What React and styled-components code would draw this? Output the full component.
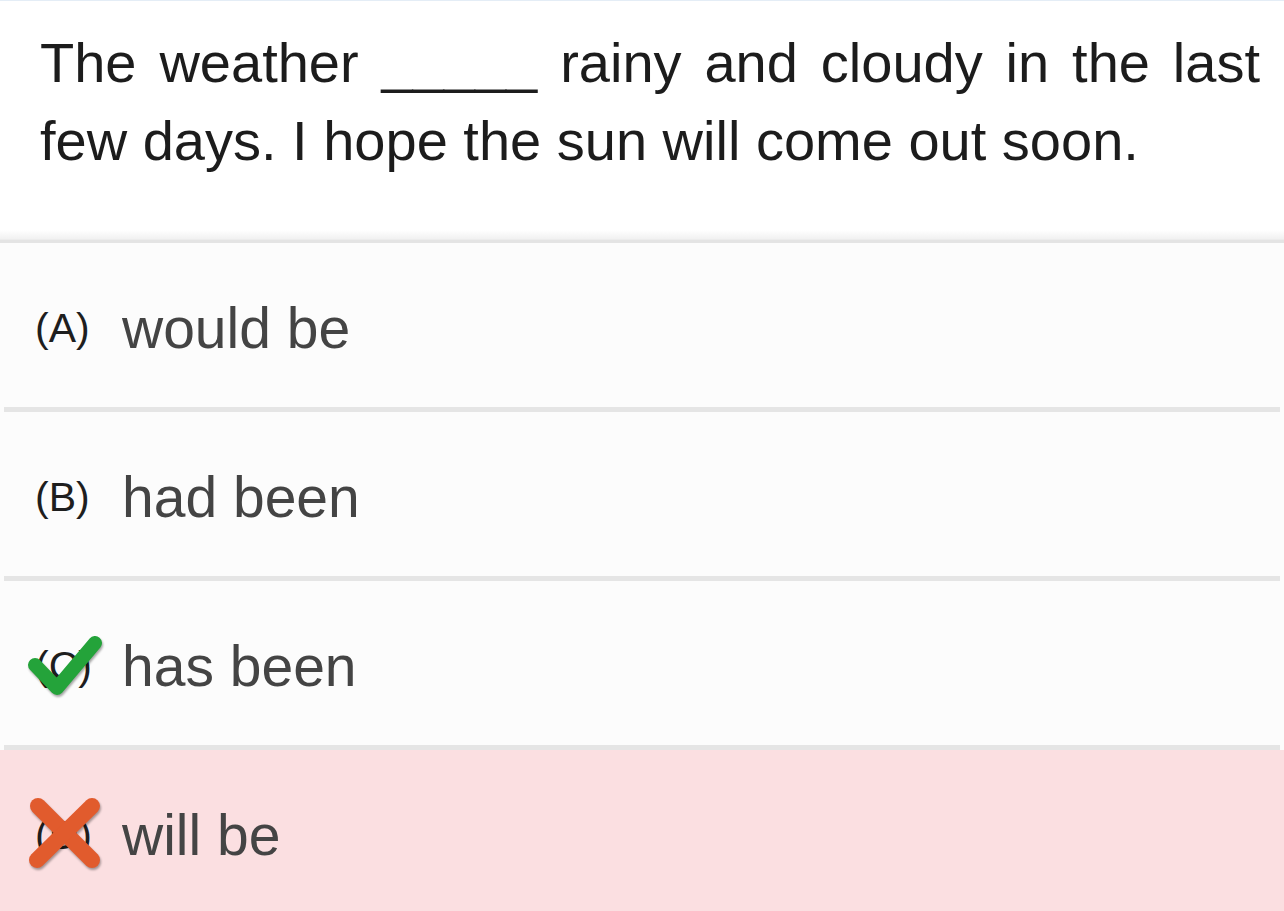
import React from "react";
import styled, { createGlobalStyle } from "styled-components";

const Global = createGlobalStyle`
  html, body { margin: 0; padding: 0; background: #ffffff; }
  body { font-family: "Liberation Sans", Arial, Helvetica, sans-serif; }
  * { box-sizing: border-box; }
`;

const Page = styled.div`
  width: 1284px;
  min-height: 911px;
  overflow: hidden;
  background: #fcfcfc;
`;

const Question = styled.div`
  background: #ffffff;
  border-top: 1px solid #e4edf6;
  padding: 23px 24px 50px 40px;
  font-size: 56px;
  line-height: 78px;
  color: #1c1c1c;
  text-align: justify;
`;

const Shade = styled.div`
  height: 13px;
  background: linear-gradient(to bottom, #ffffff 0%, #f1f1f1 70%, #e4e4e4 78%, #e4e4e4 100%);
`;

const Options = styled.div`
  display: flex;
  flex-direction: column;
`;

const Row = styled.div`
  display: flex;
  align-items: center;
  height: 164px;
  padding: 6px 0 0 35px;
  background: ${(p) => (p.$wrong ? "#fbdfe1" : "#fcfcfc")};
`;

const Separator = styled.div`
  height: 5px;
  margin: 0 4px;
  background: #e5e5e5;
`;

const LabelBox = styled.div`
  position: relative;
  width: 53px;
  margin-right: 34px;
  font-size: 41px;
  line-height: 40px;
  color: #1e1e1e;
`;

const OptionText = styled.div`
  font-size: 57px;
  line-height: 56px;
  color: #444444;
`;

const Mark = styled.svg`
  position: absolute;
  left: -9px;
  top: 50%;
  width: 80px;
  height: 80px;
  transform: translateY(-50%);
  filter: drop-shadow(1px 2px 1px rgba(0, 0, 0, 0.35));
  overflow: visible;
`;

const Check = () => (
  <Mark viewBox="0 0 80 80">
    <path
      d="M9 39 L31 62 L69 17"
      fill="none"
      stroke="#24a33a"
      strokeWidth="14"
      strokeLinecap="round"
      strokeLinejoin="round"
    />
  </Mark>
);

const Cross = () => (
  <Mark viewBox="0 0 80 80">
    <g fill="none" stroke="#e15b2d" strokeWidth="16" strokeLinecap="round">
      <path d="M12 11 L66 65" />
      <path d="M66 11 L11 65" />
    </g>
  </Mark>
);

const options = [
  { key: "A", text: "would be" },
  { key: "B", text: "had been" },
  { key: "C", text: "has been", mark: "check" },
  { key: "D", text: "will be", mark: "cross", wrong: true },
];

export default function App() {
  return (
    <Page>
      <Global />
      <Question>
        The weather _____ rainy and cloudy in the last few days. I hope the sun will come out soon.
      </Question>
      <Shade />
      <Options>
        {options.map((o, i) => (
          <React.Fragment key={o.key}>
            {i > 0 && <Separator />}
            <Row $wrong={o.wrong}>
              <LabelBox>
                ({o.key})
                {o.mark === "check" && <Check />}
                {o.mark === "cross" && <Cross />}
              </LabelBox>
              <OptionText>{o.text}</OptionText>
            </Row>
          </React.Fragment>
        ))}
      </Options>
    </Page>
  );
}
